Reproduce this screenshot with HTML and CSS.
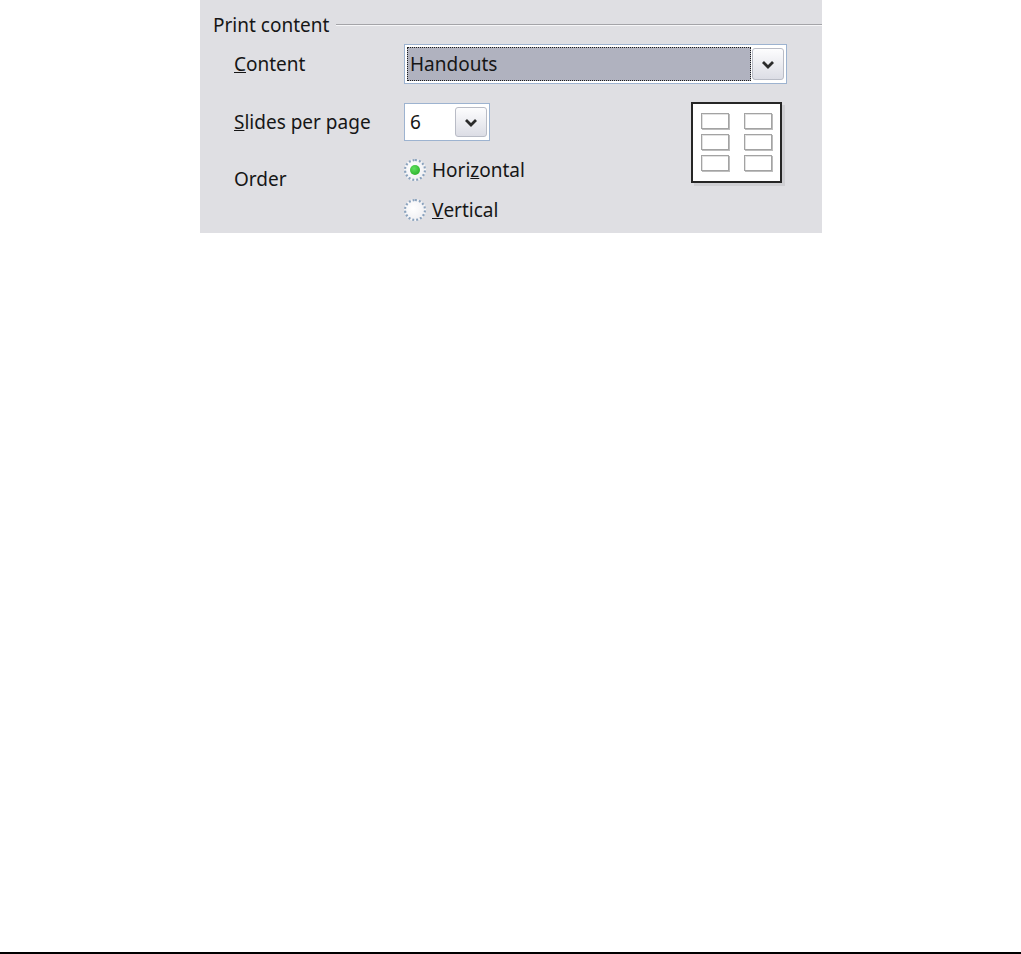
FILE: index.html
```html
<!DOCTYPE html>
<html lang="en">
<head>
    <meta charset="UTF-8">
    <title>Print content</title>
    <link rel="stylesheet" href="styles.css">
</head>
<body>

<div class="page">
    <div class="panel">
        <div class="legend">
            <span>Print content</span>
            <div class="rule"></div>
        </div>

        <div class="row row-content">
            <label class="label"><u>C</u>ontent</label>
            <div class="combo combo-wide">
                <div class="combo-text selected"><span>Handouts</span></div>
                <div class="combo-btn">
                    <svg width="14" height="9" viewBox="0 0 14 9"><path d="M2 2 L7 7 L12 2" fill="none" stroke="#2b2b2b" stroke-width="2.8"/></svg>
                </div>
            </div>
        </div>

        <div class="row row-slides">
            <label class="label"><u>S</u>lides per page</label>
            <div class="combo combo-small">
                <div class="combo-text">6</div>
                <div class="combo-btn">
                    <svg width="14" height="9" viewBox="0 0 14 9"><path d="M2 2 L7 7 L12 2" fill="none" stroke="#2b2b2b" stroke-width="2.8"/></svg>
                </div>
            </div>
            <div class="preview">
                <div class="slot"></div><div class="slot"></div>
                <div class="slot"></div><div class="slot"></div>
                <div class="slot"></div><div class="slot"></div>
            </div>
        </div>

        <div class="row row-order">
            <label class="label">Order</label>
            <div class="radios">
                <div class="radio checked"><span class="dot"></span>Hori<u>z</u>ontal</div>
                <div class="radio"><span class="dot"></span><u>V</u>ertical</div>
            </div>
        </div>
    </div>
</div>

<div class="footer-line"></div>

</body>
</html>
```

FILE: styles.css
```css
body {
    margin: 0;
    background: #fff;
    font-family: "Noto Sans", "DejaVu Sans", sans-serif;
    font-size: 19px;
    line-height: 26px;
    color: #161616;
    height: 954px;
    position: relative;
}
.page {
    padding-left: 200px;
}
.panel {
    width: 622px;
    height: 233px;
    background: #dfdfe3;
    box-sizing: border-box;
    padding: 12px 0 0 13px;
}
.legend {
    display: flex;
    align-items: center;
    gap: 7px;
}
.rule {
    flex: 1;
    height: 1px;
    background: #a4a4a8;
    border-bottom: 1px solid #f6f6f8;
}
.row {
    display: flex;
    padding-left: 21px;
}
.label {
    width: 170px;
}
.row-content {
    margin-top: 6px;
    align-items: center;
}
.combo {
    display: flex;
    border: 1px solid #9db3d0;
    background: #fff;
    box-sizing: border-box;
    padding: 2px;
}
.combo-wide {
    width: 383px;
    height: 40px;
}
.combo-small {
    width: 86px;
    height: 38px;
}
.combo-text {
    flex: 1;
    display: flex;
    align-items: center;
    padding-left: 3px;
}
.combo-text.selected {
    background: #b0b2bf;
    outline: 1px dotted #1e1e1e;
    outline-offset: -1px;
}
.combo-btn {
    width: 30px;
    margin: 1px 0 1px 1px;
    display: flex;
    align-items: center;
    justify-content: center;
    border: 1px solid #b9bcc6;
    border-radius: 3px;
    background: linear-gradient(#fdfdfe, #dcdde5);
}
.row-slides {
    margin-top: 19px;
    align-items: flex-start;
}
.row-slides .label {
    line-height: 38px;
}
.preview {
    margin: -1px 0 -43px 201px;
    width: 91px;
    height: 81px;
    box-sizing: border-box;
    background: #fff;
    border: 2px solid #262626;
    box-shadow: 3px 3px 0 #cfcfd3;
    display: grid;
    grid-template-columns: 28px 28px;
    grid-auto-rows: 16px;
    column-gap: 15px;
    row-gap: 5px;
    padding: 9px 0 0 8px;
}
.slot {
    border: 1px solid #a3a3a3;
    box-shadow: 1px 1px 0 #bdbdbd, inset 1px 1px 0 #e2e2e2;
}
.row-order {
    margin-top: 17px;
    align-items: flex-start;
}
.row-order .label {
    margin-top: 8px;
}
.radios {
    display: flex;
    flex-direction: column;
    gap: 16px;
}
.radio {
    display: flex;
    align-items: center;
    height: 24px;
}
.dot {
    width: 22px;
    height: 22px;
    box-sizing: border-box;
    border-radius: 50%;
    border: 2px dotted #8aa2bd;
    background: radial-gradient(circle at 40% 40%, #ffffff, #ececf0);
    margin-right: 6px;
    position: relative;
}
.radio.checked .dot::after {
    content: "";
    position: absolute;
    left: 4px;
    top: 4px;
    width: 10px;
    height: 10px;
    border-radius: 50%;
    background: radial-gradient(circle at 40% 35%, #5fe05f, #1fa51f);
}
.footer-line {
    position: absolute;
    left: 0;
    right: 0;
    top: 952px;
    height: 2px;
    background: #000;
}
```
